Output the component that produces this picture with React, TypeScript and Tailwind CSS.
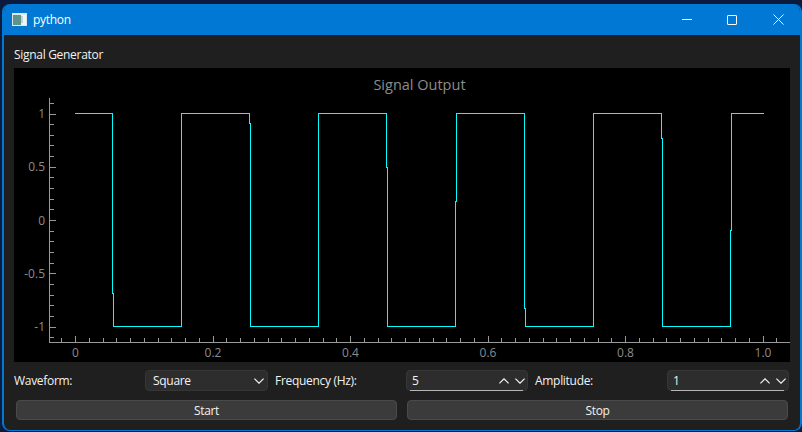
import React from "react";

const X = (v: number) => 75.5 + v * 687.5;
const Y = (v: number) => 220 + -v * 106.5;
const range = (a: number, b: number) => Array.from({ length: b - a + 1 }, (_, i) => a + i);

const wave =
  "M75 113.5H112.5V293H113.5V326.5H181.5V113.5H249.5V123H250.5V326.5H318.5V113.5H386.5V167H387.5V326.5H455.5V201H456.5V113.5H524.5V308H525.5V326.5H593.5V113.5H661.5V138H662.5V326.5H730.5V230H731.5V113.5H764";

const AXIS = "#999999";

function Chart() {
  const yLabels = ["1", "0.5", "0", "-0.5", "-1"];
  const xLabels = ["0", "0.2", "0.4", "0.6", "0.8", "1.0"];
  return (
    <svg viewBox="14 68 776 294" width="776" height="294" className="block bg-black tracking-normal">
      <text x="419.5" y="90" textAnchor="middle" fontSize="14.5" fill="#8c8c8c" fontFamily="'Open Sans', sans-serif">
        Signal Output
      </text>
      <path d="M49.5 98V342.5H790" fill="none" stroke={AXIS} shapeRendering="crispEdges" />
      {range(-11, 11).map((i) => {
        const y = Math.round(Y(i / 10)) + 0.5;
        return <line key={i} x1="50" x2={i % 5 === 0 ? 56 : 53.5} y1={y} y2={y} stroke={AXIS} shapeRendering="crispEdges" />;
      })}
      {range(-1, 51).map((i) => {
        const x = Math.round(X(i / 50) - 0.5) + 0.5;
        return <line key={i} x1={x} x2={x} y1="342" y2={i % 10 === 0 ? 336 : 338} stroke={AXIS} shapeRendering="crispEdges" />;
      })}
      {yLabels.map((t, i) => (
        <text key={t} x="45" y={Y(1 - i * 0.5) + 4.5} textAnchor="end" fontSize="12" fill="#8c8c8c" fontFamily="'Open Sans', sans-serif">
          {t}
        </text>
      ))}
      {xLabels.map((t, i) => (
        <text key={t} x={X(i * 0.2)} y="356.5" textAnchor="middle" fontSize="12" fill="#8c8c8c" fontFamily="'Open Sans', sans-serif">
          {t}
        </text>
      ))}
      <path d={wave} fill="none" stroke="#00ffff" strokeWidth="1" shapeRendering="crispEdges" />
    </svg>
  );
}

function Chevron({ up = false }: { up?: boolean }) {
  return (
    <svg width="10" height="6" viewBox="0 0 10 6" className="block">
      <path d={up ? "M0.4 5.4L5 0.8L9.6 5.4" : "M0.4 0.6L5 5.2L9.6 0.6"} fill="none" stroke="#f2f2f2" strokeWidth="1.2" />
    </svg>
  );
}

function Spin({ value }: { value: string }) {
  return (
    <div className="relative flex h-[21px] items-center justify-between rounded-[4px] border border-[#363636] bg-[#2d2d2d] pl-[5px] pr-[2px]">
      <span>{value}</span>
      <div className="flex items-center gap-[6px]">
        <Chevron up />
        <Chevron />
      </div>
      <div className="absolute bottom-[-1px] left-[3px] right-[4px] h-px bg-[#b5b5b5]" />
    </div>
  );
}

export default function App() {
  return (
    <div className="flex h-[432px] w-[802px] flex-col overflow-hidden bg-[#0b1b3d] pl-[2px] pt-[4px] pb-[1px] font-['Open_Sans',sans-serif] text-[12px] leading-[16px] tracking-[-0.3px] text-[#f2f2f2]">
      <div className="flex flex-1 flex-col overflow-hidden rounded-[8px] border-x-2 border-b-[1px] border-[#0078d4] bg-[#1f1f1f]">
        <div className="flex h-[31px] shrink-0 items-center bg-[#0078d4] pl-[8px] text-white">
          <svg width="15" height="13" viewBox="0 0 15 13" className="block">
            <rect x="0" y="0" width="15" height="13" fill="#dfe6ea" />
            <rect x="1" y="2" width="8" height="10" fill="#5f9488" />
            <rect x="9" y="2" width="5" height="10" fill="#f4f6f6" />
            <rect x="9" y="3" width="2" height="7" fill="#c4d3d6" />
          </svg>
          <span className="ml-[6px]">python</span>
          <div className="ml-auto mr-[-1px] flex h-full items-center">
            <div className="flex w-[44px] justify-center">
              <div className="h-px w-[10px] bg-white" />
            </div>
            <div className="flex w-[46px] justify-center">
              <div className="size-[10px] rounded-[1px] border border-white" />
            </div>
            <div className="flex w-[46px] justify-center">
              <svg width="11" height="11" viewBox="0 0 11 11" className="block">
                <path d="M0.5 0.5L10.5 10.5M10.5 0.5L0.5 10.5" stroke="#fff" strokeWidth="1" />
              </svg>
            </div>
          </div>
        </div>
        <div className="flex flex-1 flex-col pl-[10px] pr-[10px]">
          <div className="h-[33px] pt-[12px]">Signal Generator</div>
          <Chart />
          <div className="mt-[8px] grid grid-cols-[124px_123px_124px_122px_125px_122px] items-center gap-x-[7px]">
            <span>Waveform:</span>
            <div className="flex h-[21px] items-center justify-between rounded-[4px] border border-[#363636] bg-[#2d2d2d] pl-[7px] pr-[3px]">
              <span>Square</span>
              <Chevron />
            </div>
            <span>Frequency (Hz):</span>
            <Spin value="5" />
            <span>Amplitude:</span>
            <Spin value="1" />
          </div>
          <div className="mt-[9px] grid w-[776px] grid-cols-2 gap-x-[10px] px-[2px]">
            <div className="flex h-[20px] items-center justify-center rounded-[4px] border border-[#4a4a4a] bg-[#3b3b3b] pt-[1px]">Start</div>
            <div className="flex h-[20px] items-center justify-center rounded-[4px] border border-[#4a4a4a] bg-[#3b3b3b] pt-[1px]">Stop</div>
          </div>
        </div>
      </div>
    </div>
  );
}
